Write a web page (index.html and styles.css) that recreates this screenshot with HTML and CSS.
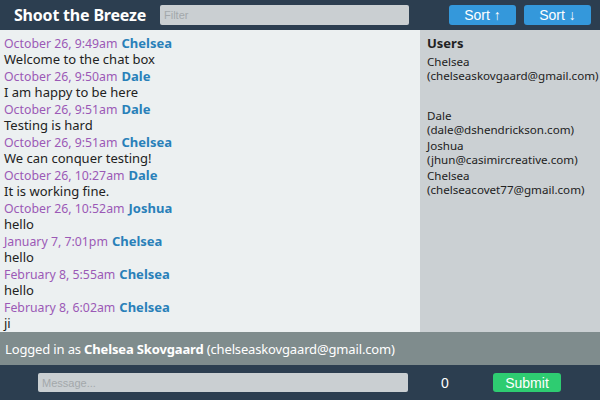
FILE: index.html
```html
<!DOCTYPE html>
<html>
<head>
<meta charset="utf-8">
<link rel="stylesheet" href="styles.css">
</head>
<body>
<header class="top">
  <h1 class="title">Shoot the Breeze</h1>
  <input class="filter" type="text" placeholder="Filter">
  <div class="sorts">
    <button class="btn sort">Sort &#x2191;</button>
    <button class="btn sort">Sort &#x2193;</button>
  </div>
</header>
<main class="main">
  <ul class="messages">
    <li class="msg"><div class="meta"><span class="time">October 26, 9:49am</span> <span class="user">Chelsea</span></div><div class="body">Welcome to the chat box</div></li>
    <li class="msg"><div class="meta"><span class="time">October 26, 9:50am</span> <span class="user">Dale</span></div><div class="body">I am happy to be here</div></li>
    <li class="msg"><div class="meta"><span class="time">October 26, 9:51am</span> <span class="user">Dale</span></div><div class="body">Testing is hard</div></li>
    <li class="msg"><div class="meta"><span class="time">October 26, 9:51am</span> <span class="user">Chelsea</span></div><div class="body">We can conquer testing!</div></li>
    <li class="msg"><div class="meta"><span class="time">October 26, 10:27am</span> <span class="user">Dale</span></div><div class="body">It is working fine.</div></li>
    <li class="msg"><div class="meta"><span class="time">October 26, 10:52am</span> <span class="user">Joshua</span></div><div class="body">hello</div></li>
    <li class="msg"><div class="meta"><span class="time">January 7, 7:01pm</span> <span class="user">Chelsea</span></div><div class="body">hello</div></li>
    <li class="msg"><div class="meta"><span class="time">February 8, 5:55am</span> <span class="user">Chelsea</span></div><div class="body">hello</div></li>
    <li class="msg"><div class="meta"><span class="time">February 8, 6:02am</span> <span class="user">Chelsea</span></div><div class="body">ji</div></li>
  </ul>
  <aside class="users">
    <h2 class="users-title">Users</h2>
    <ul class="user-list">
      <li class="u">Chelsea<br>(chelseaskovgaard@gmail.com)</li>
      <li class="u u-empty"></li>
      <li class="u">Dale<br>(dale@dshendrickson.com)</li>
      <li class="u">Joshua<br>(jhun@casimircreative.com)</li>
      <li class="u">Chelsea<br>(chelseacovet77@gmail.com)</li>
    </ul>
  </aside>
</main>
<section class="status"><span>Logged in as <strong>Chelsea Skovgaard</strong> (chelseaskovgaard@gmail.com)</span></section>
<footer class="composer">
  <input class="message" type="text" placeholder="Message...">
  <span class="count">0</span>
  <button class="btn submit">Submit</button>
</footer>
</body>
</html>
```
FILE: styles.css
```css
* { box-sizing: border-box; }
html, body { margin: 0; padding: 0; }
body {
  width: 600px;
  height: 400px;
  overflow: hidden;
  display: flex;
  flex-direction: column;
  font-family: "Noto Sans", "Open Sans", sans-serif;
  background: #2c3e50;
}
.top {
  height: 30px;
  flex: none;
  background: #2c3e50;
  display: flex;
  align-items: center;
  padding: 0 9px 0 14px;
}
.title {
  margin: 0;
  font-size: 16px;
  font-weight: 700;
  color: #fff;
  letter-spacing: -0.2px;
  width: 146px;
  white-space: nowrap;
}
.filter {
  width: 249px;
  height: 20px;
  border: none;
  border-radius: 2px;
  background: #cacfd2;
  font-family: "Liberation Sans", sans-serif;
  font-size: 11px;
  padding: 0 4px;
}
.filter::placeholder, .message::placeholder { color: #a3a8ab; }
.sorts { margin-left: auto; display: flex; gap: 8px; }
.btn {
  border: none;
  border-radius: 3px;
  color: #fff;
  font-family: "Liberation Sans", sans-serif;
  font-size: 14px;
  height: 20px;
  padding: 0;
  line-height: 20px;
}
.sort { width: 67px; background: #3498db; }
.main {
  flex: none;
  height: 302px;
  display: flex;
}
.messages {
  flex: none;
  list-style: none;
  margin: 0;
  padding: 5px 4px 0;
  width: 420px;
  background: #ecf0f1;
  overflow: hidden;
}
.msg { margin-bottom: 1px; font-size: 13px; line-height: 16px; }
.meta { height: 16px; display: flex; align-items: baseline; gap: 4px; }
.time { color: #9b59b6; font-size: 12.3px; }
.user { color: #2980b9; font-weight: 700; font-size: 13px; }
.body { color: #222; height: 16px; }
.users {
  flex: 1;
  min-width: 0;
  overflow: hidden;
  background: #cbd0d3;
  padding: 5px 0 0 7px;
  color: #222;
}
.users-title {
  margin: 0 0 4px;
  font-size: 13px;
  font-weight: 700;
  line-height: 16px;
}
.user-list { list-style: none; margin: 0; padding: 0; }
.u { font-size: 11.6px; line-height: 14px; margin-bottom: 2px; white-space: nowrap; }
.u-empty { height: 22px; }
.status {
  flex: none;
  height: 33px;
  background: #7f8c8d;
  color: #fff;
  font-size: 13px;
  letter-spacing: -0.15px;
  display: flex;
  align-items: center;
  padding-left: 5px;
}
.composer {
  flex: none;
  height: 35px;
  background: #2c3e50;
  display: flex;
  align-items: center;
  padding-left: 38px;
}
.message {
  width: 370px;
  height: 19px;
  border: none;
  border-radius: 2px;
  background: #cacfd2;
  font-family: "Liberation Sans", sans-serif;
  font-size: 11px;
  padding: 0 4px;
}
.count {
  width: 74px;
  text-align: center;
  color: #fff;
  font-family: "Liberation Sans", sans-serif;
  font-size: 14px;
}
.submit { width: 68px; height: 19px; margin-left: 11px; background: #2ecc71; font-size: 14px; }
```
